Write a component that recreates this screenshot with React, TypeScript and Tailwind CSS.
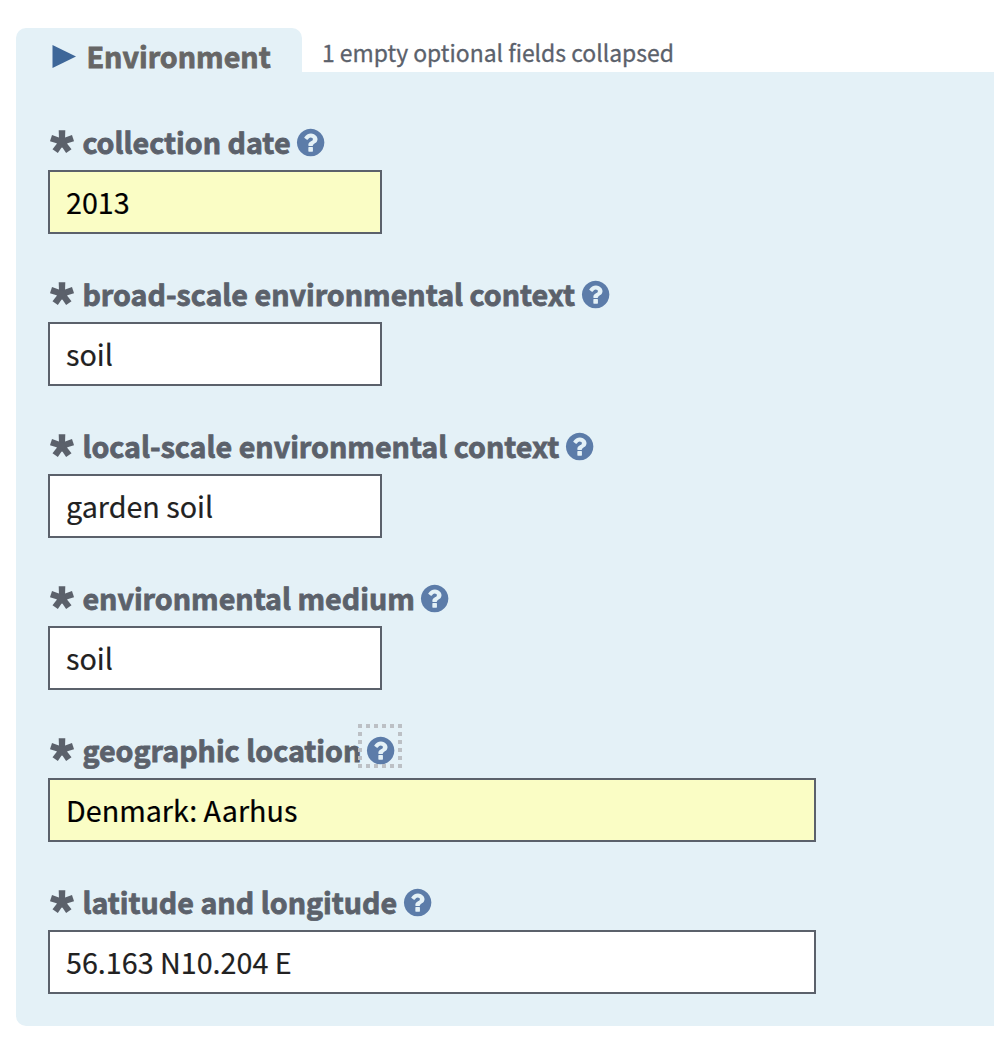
type Field = {
  label: string;
  value: string;
  filled?: boolean;
  wide?: boolean;
  focused?: boolean;
  labelWidth: string;
};

const fields: Field[] = [
  { label: "collection date", value: "2013", filled: true, labelWidth: "w-[208px]" },
  { label: "broad-scale environmental context", value: "soil", labelWidth: "w-[493px]" },
  { label: "local-scale environmental context", value: "garden soil", labelWidth: "w-[477px]" },
  { label: "environmental medium", value: "soil", labelWidth: "w-[332px]" },
  { label: "geographic location", value: "Denmark: Aarhus", filled: true, wide: true, focused: true, labelWidth: "w-[278px]" },
  { label: "latitude and longitude", value: "56.163 N10.204 E", wide: true, labelWidth: "w-[315px]" },
];

function RequiredMark() {
  return (
    <svg className="mr-2 h-6 w-6 shrink-0" viewBox="-12 -12 24 24" fill="#5b616b" aria-hidden="true">
      <circle cy="0.2" r="5.4" />
      {[0, 72, 144, 216, 288].map((angle) => (
        <path key={angle} d="M-3.3-11.6H3.3L2.8 3H-2.8Z" transform={`translate(0 -0.2) rotate(${angle})`} />
      ))}
    </svg>
  );
}

function HelpIcon() {
  return (
    <svg className="block h-8 w-8" viewBox="0 0 1792 1792" fill="#5c7ca9" aria-hidden="true">
      <path transform="translate(-20 30)" d="M1024 1376v-192q0-14-9-23t-23-9h-192q-14 0-23 9t-9 23v192q0 14 9 23t23 9h192q14 0 23-9t9-23zm256-672q0-88-55.5-163t-138.5-116-170-41q-243 0-371 213-15 24 8 42l132 100q7 6 19 6 16 0 25-12 53-68 86-92 34-24 86-24 48 0 85.5 26t37.5 59q0 38-20 61t-68 45q-63 28-115.5 86.5t-52.5 125.5v36q0 14 9 23t23 9h192q14 0 23-9t9-23q0-19 21.5-49.5t54.5-49.5q32-18 49-28.5t46-35 44.5-48 28-60.5 12.5-81zm384 192q0 209-103 385.5t-279.5 279.5-385.5 103-385.5-103-279.5-279.5-103-385.5 103-385.5 279.5-279.5 385.5-103 385.5 103 279.5 279.5 103 385.5z" />
    </svg>
  );
}

function FocusRing() {
  return (
    <svg className="absolute -left-[7px] -top-[10px] h-11 w-11" viewBox="0 0 44 44" fill="none" stroke="#bcc0c5" strokeWidth="4" strokeDasharray="4 4" aria-hidden="true">
      <path d="M0 2H44M0 42H44M2 8V40M42 8V40" />
    </svg>
  );
}

function FieldRow({ label, value, filled, wide, focused, labelWidth }: Field) {
  return (
    <div className="flex flex-col">
      <div className="flex h-[46px] items-start">
        <div className="flex h-9 items-center pl-[2px]">
          <RequiredMark />
          <label className={`${labelWidth} pl-[0.4px] whitespace-nowrap text-[28.65px] leading-9 font-bold text-[#5b616b] [-webkit-text-stroke:0.8px_#5b616b]`}>
            {label}
          </label>
          <span className="relative ml-[5px] block h-8 w-8">
            <HelpIcon />
            {focused && <FocusRing />}
          </span>
        </div>
      </div>
      <div
        className={`flex h-16 items-center border-2 border-[#5b616b] px-4 text-[28.7px] leading-10 whitespace-nowrap [-webkit-text-stroke:0.2px_currentColor] ${
          wide ? "w-[768px]" : "w-[334px]"
        } ${filled ? "bg-[#fafdc5] text-black" : "bg-white text-[#212121]"}`}
      >
        {value}
      </div>
    </div>
  );
}

export default function App() {
  return (
    <main className="h-[1052px] w-full overflow-hidden bg-white pt-7 pl-4 font-['Noto_Sans_CJK_SC',sans-serif]">
      <header className="flex h-11">
        <h2 className="flex h-11 w-[286px] items-center rounded-t-[10px] bg-[#e4f1f7] pt-3 pl-9 text-[28.65px] leading-10 font-bold text-[#666] [-webkit-text-stroke:0.8px_#666]">
          <svg className="mr-[10.5px] h-6 w-6 shrink-0" viewBox="0 0 24 24" fill="#3e6799" aria-hidden="true">
            <path d="M0.5 1L24 12.5L0.5 24Z" />
          </svg>
          Environment
        </h2>
        <p className="pt-1 pl-5 text-[22.92px] leading-10 whitespace-nowrap text-[#5b616b] [-webkit-text-stroke:0.3px_#5b616b]">
          1 empty optional fields collapsed
        </p>
      </header>
      <section className="flex h-[954px] flex-col gap-[42px] rounded-bl-[10px] bg-[#e4f1f7] pt-[52px] pl-8">
        {fields.map((field) => (
          <FieldRow key={field.label} {...field} />
        ))}
      </section>
    </main>
  );
}
